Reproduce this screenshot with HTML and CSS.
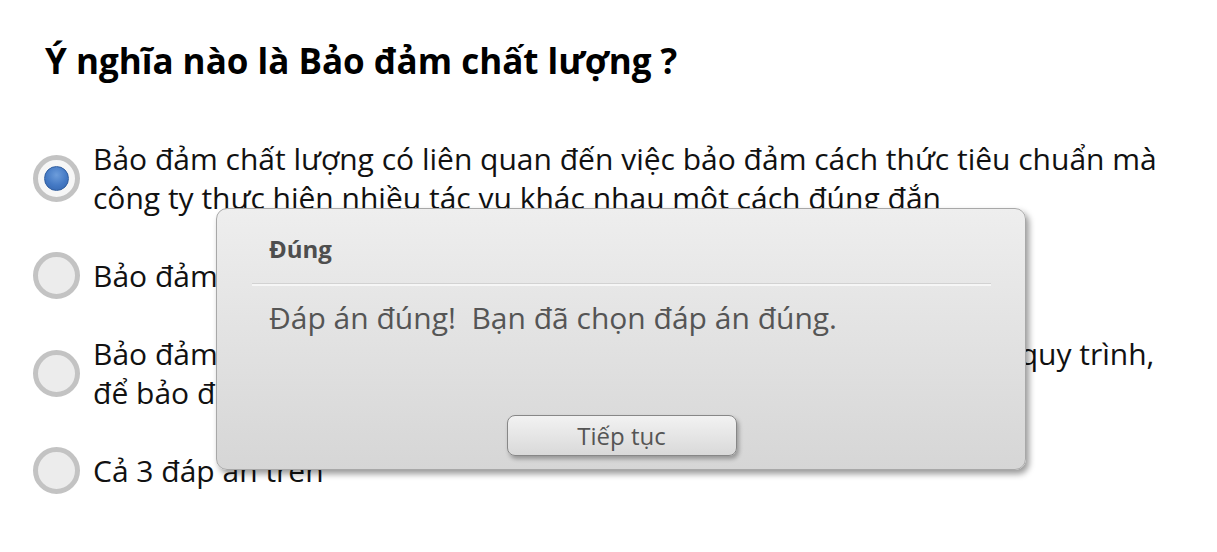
FILE: index.html
```html
<!DOCTYPE html>
<html lang="vi">
<head>
<meta charset="utf-8">
<title>Quiz</title>
<link rel="stylesheet" href="styles.css">
</head>
<body>
<main class="quiz">
  <h1 class="question">Ý nghĩa nào là Bảo đảm chất lượng ?</h1>
  <ul class="options">
    <li class="option">
      <span class="radio checked"><span class="dot"></span></span>
      <span class="label">Bảo đảm chất lượng có liên quan đến việc bảo đảm cách thức tiêu chuẩn mà<br>công ty thực hiện nhiều tác vụ khác nhau một cách đúng đắn</span>
    </li>
    <li class="option">
      <span class="radio"></span>
      <span class="label">Bảo đảm chất lượng là kiểm tra sản phẩm sau khi hoàn thành</span>
    </li>
    <li class="option">
      <span class="radio"></span>
      <span class="label">Bảo đảm chất lượng là việc theo dõi, đánh giá và cải tiến tất cả các quy trình,<br>để bảo đảm sản phẩm đáp ứng yêu cầu</span>
    </li>
    <li class="option">
      <span class="radio"></span>
      <span class="label">Cả 3 đáp án trên</span>
    </li>
  </ul>
</main>
<div class="dialog">
  <div class="dialog-title">Đúng</div>
  <div class="dialog-sep"></div>
  <div class="dialog-msg">Đáp án đúng!&nbsp; Bạn đã chọn đáp án đúng.</div>
  <div class="dialog-actions">
    <button class="btn">Tiếp tục</button>
  </div>
</div>
</body>
</html>
```
FILE: styles.css
```css
html, body {
  margin: 0;
  padding: 0;
  background: #fff;
}
body {
  font-family: "Open Sans", "Liberation Sans", sans-serif;
  color: #111;
  position: relative;
  width: 1217px;
  height: 552px;
  overflow: hidden;
}
.quiz {
  padding: 37px 0 0 45px;
}
.question {
  margin: 0;
  font-size: 35px;
  font-weight: 700;
  line-height: 48px;
  color: #000;
}
.options {
  list-style: none;
  margin: 54px 0 0 -12px;
  padding: 0;
}
.option {
  display: flex;
  align-items: center;
  gap: 13px;
  margin-bottom: 35px;
}
.radio {
  flex: none;
  width: 47px;
  height: 47px;
  box-sizing: border-box;
  border-radius: 50%;
  border: 5px solid #c3c3c3;
  background: #ececec;
  display: flex;
  align-items: center;
  justify-content: center;
}
.radio.checked {
  background: #f6f6f6;
}
.dot {
  width: 25px;
  height: 25px;
  box-sizing: border-box;
  border-radius: 50%;
  border: 1px solid #2f5d9f;
  background: radial-gradient(circle at 50% 35%, #6d9ddb 0%, #4479c4 55%, #3464ac 100%);
}
.label {
  font-size: 30px;
  line-height: 39px;
  color: #111;
}
.dialog {
  position: absolute;
  left: 216px;
  top: 208px;
  width: 810px;
  height: 262px;
  box-sizing: border-box;
  border: 1px solid #a8a8a8;
  border-radius: 11px;
  background: linear-gradient(#eeeeee, #d6d6d6);
  box-shadow: 3px 4px 6px rgba(0,0,0,0.4);
  padding: 23px 34px 0 35px;
  color: #555;
}
.dialog-title {
  font-weight: 700;
  font-size: 24px;
  line-height: 34px;
  padding-left: 17px;
  color: #4e4e4e;
}
.dialog-sep {
  height: 3px;
  margin-top: 17px;
  background: #f6f6f6;
  border-top: 1px solid #d2d2d2;
  box-sizing: border-box;
}
.dialog-msg {
  font-size: 30px;
  line-height: 40px;
  padding-left: 17px;
  margin-top: 12px;
  color: #555;
}
.dialog-actions {
  display: flex;
  justify-content: center;
  margin-top: 77px;
}
.btn {
  width: 230px;
  height: 41px;
  border: 1px solid #878787;
  border-radius: 8px;
  background: linear-gradient(#f2f2f2, #d9d9d9);
  box-shadow: 2px 3px 4px rgba(0,0,0,0.3);
  font-family: "Open Sans", "Liberation Sans", sans-serif;
  font-size: 24px;
  line-height: 39px;
  color: #555;
  padding: 0;
}
```
